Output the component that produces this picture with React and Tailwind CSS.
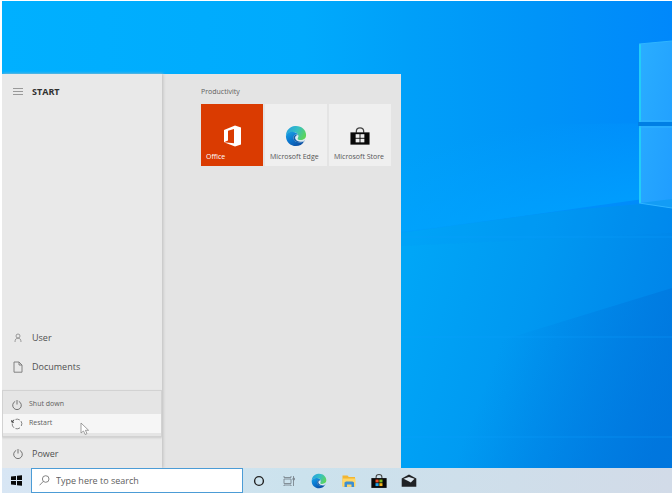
import React from "react";

function Wallpaper() {
  return (
    <svg className="absolute inset-0 h-full w-full" viewBox="0 0 670 467" preserveAspectRatio="none" aria-hidden="true">
      <defs>
        <linearGradient id="sky" x1="0" y1="0" x2="1" y2="0">
          <stop offset="0" stopColor="#00b0ff" />
          <stop offset="0.45" stopColor="#00aafc" />
          <stop offset="0.6" stopColor="#00a0f9" />
          <stop offset="0.8" stopColor="#0094f8" />
          <stop offset="1" stopColor="#0088fb" />
        </linearGradient>
        <linearGradient id="ground" gradientUnits="userSpaceOnUse" x1="400" y1="280" x2="680" y2="360">
          <stop offset="0" stopColor="#00a6f7" />
          <stop offset="0.45" stopColor="#0098f1" />
          <stop offset="1" stopColor="#0081e8" />
        </linearGradient>
        <linearGradient id="shade" gradientUnits="userSpaceOnUse" x1="500" y1="340" x2="680" y2="410">
          <stop offset="0" stopColor="#0070d8" stopOpacity="0" />
          <stop offset="1" stopColor="#0070d8" stopOpacity="0.65" />
        </linearGradient>
        <linearGradient id="beam" gradientUnits="userSpaceOnUse" x1="540" y1="120" x2="560" y2="215">
          <stop offset="0" stopColor="#00a4ff" stopOpacity="0" />
          <stop offset="1" stopColor="#00a4ff" stopOpacity="0.7" />
        </linearGradient>
        <linearGradient id="pane" x1="0" y1="0" x2="1" y2="1">
          <stop offset="0" stopColor="#2aaeff" />
          <stop offset="1" stopColor="#209dff" />
        </linearGradient>
      </defs>
      <rect width="670" height="467" fill="url(#sky)" />
      <path d="M398 125L670 122V194L398 232Z" fill="url(#beam)" />
      <path d="M398 232L560 210L638 203L670 207V467H398Z" fill="url(#ground)" />
      <path d="M398 231L560 210L638 202L670 198V232L398 245Z" fill="#0096fa" opacity="0.15" />
      <path d="M398 374L510 336L670 287V467H398Z" fill="url(#shade)" />
      <path d="M398 236H670M398 336H670M398 436H670" stroke="#0aa0ff" strokeOpacity="0.4" fill="none" />
      <path d="M636 121H670V125H636Z" fill="#007fe4" />
      <path d="M637 43L670 40V121H637ZM637 125H670V207L637 202Z" fill="url(#pane)" />
      <path d="M638 202L670 198V207Z" fill="#139cf5" />
      <path d="M638 43V121M638 125V202" stroke="#22cdf8" strokeWidth="2" fill="none" />
      <path d="M637 43L670 40M637 120H670M637 126H670M637 202L670 207" stroke="#2fb4ff" fill="none" />
    </svg>
  );
}

function MenuIcon() {
  return (
    <svg className="h-3 w-3" viewBox="0 0 12 12" fill="none" stroke="#999" aria-hidden="true">
      <path d="M1 2.5H11M1 5.5H11M1 8.5H11" />
    </svg>
  );
}

function UserIcon() {
  return (
    <svg className="h-3 w-3" viewBox="0 0 12 12" fill="none" stroke="#858585" strokeWidth="0.8" aria-hidden="true">
      <circle cx="6" cy="4" r="2" />
      <path d="M3 10C3 7.2 4.2 6.2 6 6.2S9 7.2 9 10" />
    </svg>
  );
}

function DocumentIcon() {
  return (
    <svg className="h-3 w-3" viewBox="0 0 12 12" fill="none" stroke="#777" strokeWidth="0.9" aria-hidden="true">
      <path d="M2 1H7L10 4V11.2H2ZM7 1V4H10" />
    </svg>
  );
}

function PowerIcon() {
  return (
    <svg className="h-3 w-3" viewBox="0 0 12 12" fill="none" stroke="#666" strokeWidth="0.9" aria-hidden="true">
      <path d="M4.2 2.4A4.3 4.3 0 1 0 7.8 2.4M6 1V5.5" />
    </svg>
  );
}

function RestartIcon() {
  return (
    <svg className="h-3 w-3" viewBox="0 0 12 12" fill="none" stroke="#777" strokeWidth="0.9" aria-hidden="true">
      <path d="M4.5 1.4A4.8 4.8 0 0 1 8.8 2M10 3.1A4.8 4.8 0 0 1 10.3 8M9 9.8A4.8 4.8 0 0 1 4.5 10.6M3 9.8A4.8 4.8 0 0 1 1.2 5.5" />
      <path d="M0.8 2V4.2H3M1 4A5 5 0 0 1 3.2 1.9" stroke="#333" />
    </svg>
  );
}

function EdgeIcon({ id, className }) {
  const blue = id + "-blue";
  const green = id + "-green";
  return (
    <svg className={className} viewBox="0 0 24 24" aria-hidden="true">
      <defs>
        <linearGradient id={blue} x1="0" y1="0" x2="0.7" y2="1">
          <stop offset="0" stopColor="#1ba5e4" />
          <stop offset="0.5" stopColor="#0b78d0" />
          <stop offset="1" stopColor="#0c4fa3" />
        </linearGradient>
        <linearGradient id={green} x1="0" y1="0.2" x2="1" y2="0.6">
          <stop offset="0" stopColor="#259fe0" />
          <stop offset="0.5" stopColor="#35bfc4" />
          <stop offset="1" stopColor="#5ed556" />
        </linearGradient>
      </defs>
      <path d="M1 12C1 6 5 1.5 11 1C18 0.5 23 5 23 11C23 15 20 17 16.5 17C14 17 13 16 13 15.2C13 14.5 14.5 14 14.5 12C14.5 9.5 12.5 7.5 9 7.5C5 7.5 2 9 1 12Z" fill={`url(#${green})`} />
      <path d="M1 12C2 8.5 5.5 7 9 7.5C11.8 7.8 13.8 9 14.3 11C12 9.5 8.8 11.5 9.2 14.5C9.6 18 14.5 20.5 20.8 18C19 21.3 15.8 23 12 23C5.8 23 1 18.3 1 12Z" fill={`url(#${blue})`} />
      <path d="M9.2 14.5C8.8 11.5 11.5 9.8 14.3 11C14.9 13 13 14.3 13 15.2C13 17 17.5 18.2 21.5 15.5C22 16 21.5 17.4 20.8 18C15 20.5 9.6 18.5 9.2 14.5Z" fill="#155ea8" />
      <path d="M14.4 10.8C15 13 13.6 14.3 13.8 15.2C14.5 16.8 18.5 17 22.6 14.4C22 16.6 21.3 17.6 20.2 18C16 19 11.4 17.2 11 14.2C10.9 12.2 12.4 10.6 14.4 10.8Z" fill="#dcebf2" />
    </svg>
  );
}

function OfficeIcon() {
  return (
    <svg className="h-6 w-6" viewBox="0 0 24 24" fill="#fff" aria-hidden="true">
      <path fillRule="evenodd" d="M4 6L15 1.5L21 3.5V20.5L15 22.5L4 18.3L14 19.3V5L8 6.7V16.5L4 18.3Z" />
    </svg>
  );
}

function StoreIcon({ className, colors }) {
  return (
    <svg className={className} viewBox="0 0 22 22" aria-hidden="true">
      <path d="M7 7.5V5.5C7 3 8.5 2 11 2S15 3 15 5.5V7.5" fill="none" stroke="#444" strokeWidth="1.4" />
      <path d="M0.5 7H21.5V20.5H0.5Z" fill="#080808" />
      <path d="M6.2 9H10.5V13H6.2Z" fill={colors[0]} />
      <path d="M11.5 9H15.8V13H11.5Z" fill={colors[1]} />
      <path d="M6.2 14H10.5V18H6.2Z" fill={colors[2]} />
      <path d="M11.5 14H15.8V18H11.5Z" fill={colors[3]} />
    </svg>
  );
}

function FolderIcon() {
  return (
    <svg className="h-[14px] w-[14px]" viewBox="0 0 14 14" aria-hidden="true">
      <path d="M0.5 1.5H5.5L6.8 3H13V12.5H0.5Z" fill="#f2b632" />
      <path d="M0.5 4.5H13.5V12.5H0.5Z" fill="#ffd767" />
      <path d="M2.5 13V8.5L4 7.5H10.5L12 8.5V13H9.5V10.5H5V13Z" fill="#3c8ed2" />
    </svg>
  );
}

function MailIcon() {
  return (
    <svg className="h-4 w-4" viewBox="0 0 16 16" aria-hidden="true">
      <path d="M0.7 5.5L8 1.5L15.3 5.5V13.7H0.7Z" fill="#202225" />
      <path d="M2.5 5.8L8 4L13.5 5.8L9.8 9.6L7.6 8.2Z" fill="#dbe7ef" />
    </svg>
  );
}

function NavItem({ icon, label }) {
  return (
    <button className="flex h-[29px] w-full items-center gap-2 pl-[10px] text-left text-[9px] text-[#505050]">
      {icon}
      {label}
    </button>
  );
}

function TaskButton({ label, children }) {
  return (
    <button aria-label={label} className="flex w-[30px] shrink-0 items-center justify-center self-stretch">
      {children}
    </button>
  );
}

function Tile({ label, dark, children }) {
  const tone = dark ? "bg-[#da3b01] text-white" : "bg-[#efefef] text-[#555]";
  return (
    <button className={`flex h-[62px] w-[62px] flex-col items-center pt-5 text-[7px] leading-[10px] ${tone}`}>
      <span className="flex h-6 items-center">{children}</span>
      <span className="mt-1 w-full whitespace-nowrap pl-[5px] text-left">{label}</span>
    </button>
  );
}

function StartMenu() {
  return (
    <div className="relative flex w-[399px] bg-[#e4e4e4]">
      <nav aria-label="Start" className="flex w-[160px] shrink-0 flex-col bg-[#e9e9e9] shadow-[1px_0_3px_#bdbdbd]">
        <button className="mt-[3px] flex h-[29px] items-center gap-2 pl-[10px] text-[9px] font-bold text-[#303030]">
          <MenuIcon />
          START
        </button>
        <div className="mt-auto">
          <NavItem icon={<UserIcon />} label="User" />
          <NavItem icon={<DocumentIcon />} label="Documents" />
        </div>
        <div role="menu" aria-label="Power options" className="relative mb-[2px] mt-[9px] border border-[#d2d2d2] bg-[#e5e5e5] pb-[3px] pt-1 text-[7px] text-[#606060] shadow-[0_1px_2px_#cccccc]">
          <button role="menuitem" className="flex h-[19px] w-full items-center gap-[6px] pl-2">
            <PowerIcon />
            Shut down
          </button>
          <button role="menuitem" className="flex h-[19px] w-full items-center gap-[6px] bg-[#f6f6f6] pl-2">
            <RestartIcon />
            Restart
          </button>
          <svg className="absolute bottom-0 left-[77px] h-[14px] w-[10px]" viewBox="0 0 10 14" fill="#fff" stroke="#888" strokeWidth="0.8" aria-hidden="true">
            <path d="M1 1V11L3.5 9L5.2 12.5L7 11.6L5.4 8.3H8.6Z" />
          </svg>
        </div>
        <NavItem icon={<PowerIcon />} label="Power" />
      </nav>
      <section aria-labelledby="group-title" className="pl-[39px] pt-3">
        <h2 id="group-title" className="text-[7px] leading-3 text-[#606060]">Productivity</h2>
        <div className="mt-[6px] flex gap-[2px]">
          <Tile label="Office" dark><OfficeIcon /></Tile>
          <Tile label="Microsoft Edge"><EdgeIcon id="edge-tile" className="h-[22px] w-[22px]" /></Tile>
          <Tile label="Microsoft Store"><StoreIcon className="h-5 w-5" colors={["#eee", "#eee", "#eee", "#eee"]} /></Tile>
        </div>
      </section>
    </div>
  );
}

function Taskbar() {
  return (
    <footer className="relative flex h-[25px] shrink-0 items-center bg-linear-to-r from-[#d8e6f4] via-[#cbe2ed] via-45% to-[#d2dbe8]">
      <button aria-label="Start" className="flex w-[29px] justify-center">
        <svg className="h-[11px] w-[11px]" viewBox="0 0 11 11" fill="#080808" aria-hidden="true">
          <path d="M0 1.5L5 1V5H0ZM6 0.8L11 0.2V5H6ZM0 6H5V10L0 9.5ZM6 6H11V10.8L6 10.2Z" />
        </svg>
      </button>
      <label className="flex w-[212px] items-center gap-[6px] self-stretch border border-[#4c9cd6] bg-white pl-[7px]">
        <svg className="h-[11px] w-[11px] shrink-0" viewBox="0 0 11 11" fill="none" stroke="#777" strokeWidth="0.9" aria-hidden="true">
          <circle cx="6.7" cy="4" r="3.3" />
          <path d="M4.3 6.4L0.5 10.3" />
        </svg>
        <input type="search" aria-label="Search" placeholder="Type here to search" className="min-w-0 flex-1 bg-transparent text-[9px] outline-none placeholder:text-[#606060]" />
      </label>
      <div className="flex self-stretch pl-px">
        <TaskButton label="Cortana">
          <svg className="h-3 w-3" viewBox="0 0 12 12" fill="none" stroke="#222" strokeWidth="1.4" aria-hidden="true">
            <circle cx="6" cy="6" r="4.4" />
          </svg>
        </TaskButton>
        <TaskButton label="Task view">
          <svg className="h-3 w-3" viewBox="0 0 12 12" fill="none" stroke="#7c878e" strokeWidth="0.9" aria-hidden="true">
            <path d="M1 1V2.5H8V1M1 4H8V8.5H1ZM1 11V10H8V11M10.5 1V11" />
            <path d="M10 3H11.3V5H10Z" fill="#7c878e" />
          </svg>
        </TaskButton>
        <TaskButton label="Microsoft Edge"><EdgeIcon id="edge-bar" className="h-4 w-4" /></TaskButton>
        <TaskButton label="File Explorer"><FolderIcon /></TaskButton>
        <TaskButton label="Microsoft Store"><StoreIcon className="h-4 w-4" colors={["#ef5128", "#83bb20", "#22a3e8", "#f7b51b"]} /></TaskButton>
        <TaskButton label="Mail"><MailIcon /></TaskButton>
      </div>
    </footer>
  );
}

export default function App() {
  return (
    <div className="flex min-h-screen flex-col bg-white pb-[2px] pl-[2px] pt-px font-['Open_Sans','Noto_Sans',sans-serif]">
      <main className="relative flex flex-1 overflow-hidden pt-[73px]">
        <Wallpaper />
        <StartMenu />
      </main>
      <Taskbar />
    </div>
  );
}
